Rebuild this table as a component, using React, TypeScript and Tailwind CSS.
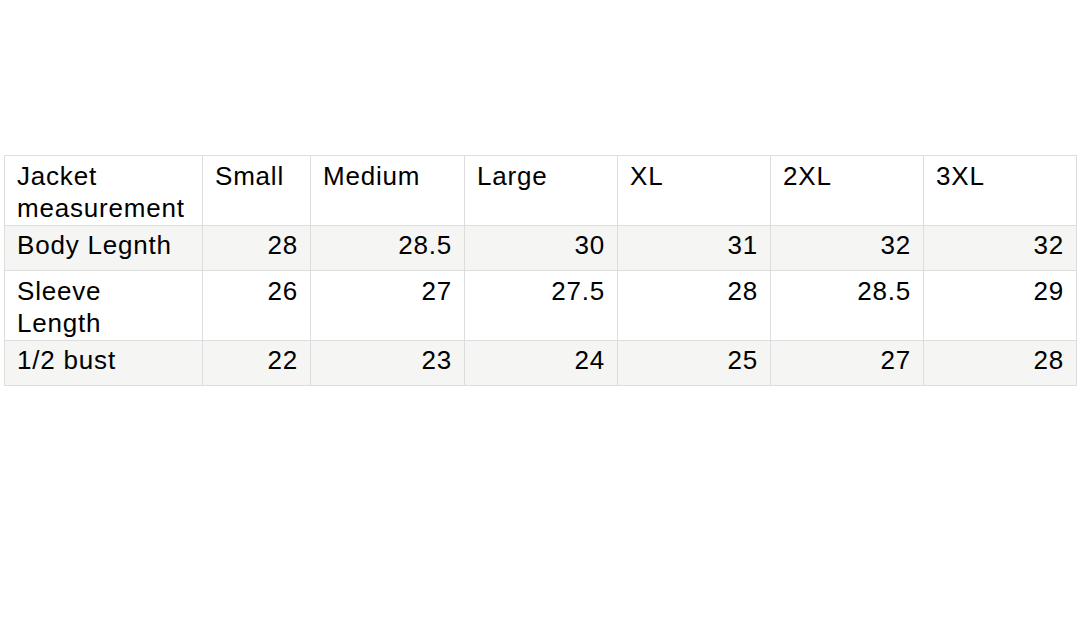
const sizes = ["Small", "Medium", "Large", "XL", "2XL", "3XL"];

const rows = [
  { label: ["Body Legnth"], values: ["28", "28.5", "30", "31", "32", "32"], tall: false, shaded: true },
  { label: ["Sleeve", "Length"], values: ["26", "27", "27.5", "28", "28.5", "29"], tall: true, shaded: false },
  { label: ["1/2 bust"], values: ["22", "23", "24", "25", "27", "28"], tall: false, shaded: true },
];

const widths = ["w-[198px]", "w-[108px]", "w-[154px]", "w-[153px]", "w-[153px]", "w-[153px]", "w-[153px]"];

const cell = "border border-[#dddddd] align-top px-[12px]";

export default function App() {
  return (
    <div className="min-h-screen bg-white pt-[155px] pl-[4px] font-['Liberation_Sans',Arial,sans-serif] text-[26px] leading-[32px] tracking-[0.8px] text-black">
      <table className="border-collapse table-fixed w-[1073px]">
        <colgroup>
          {widths.map((w, i) => (
            <col key={i} className={w} />
          ))}
        </colgroup>
        <tbody>
          <tr className="h-[70px] bg-white">
            <td className={`${cell} pt-[4px]`}>
              Jacket
              <br />
              measurement
            </td>
            {sizes.map((s) => (
              <td key={s} className={`${cell} pt-[4px]`}>
                {s}
              </td>
            ))}
          </tr>
          {rows.map((r) => {
            const pad = r.tall ? "pt-[4px]" : "pt-[3px]";
            return (
              <tr key={r.label.join(" ")} className={`${r.tall ? "h-[70px]" : "h-[45px]"} ${r.shaded ? "bg-[#f5f5f4]" : "bg-white"}`}>
                <td className={`${cell} ${pad}`}>
                  {r.label.map((l, i) => (
                    <div key={i}>{l}</div>
                  ))}
                </td>
                {r.values.map((v, i) => (
                  <td key={i} className={`${cell} ${pad} text-right`}>
                    {v}
                  </td>
                ))}
              </tr>
            );
          })}
        </tbody>
      </table>
    </div>
  );
}
